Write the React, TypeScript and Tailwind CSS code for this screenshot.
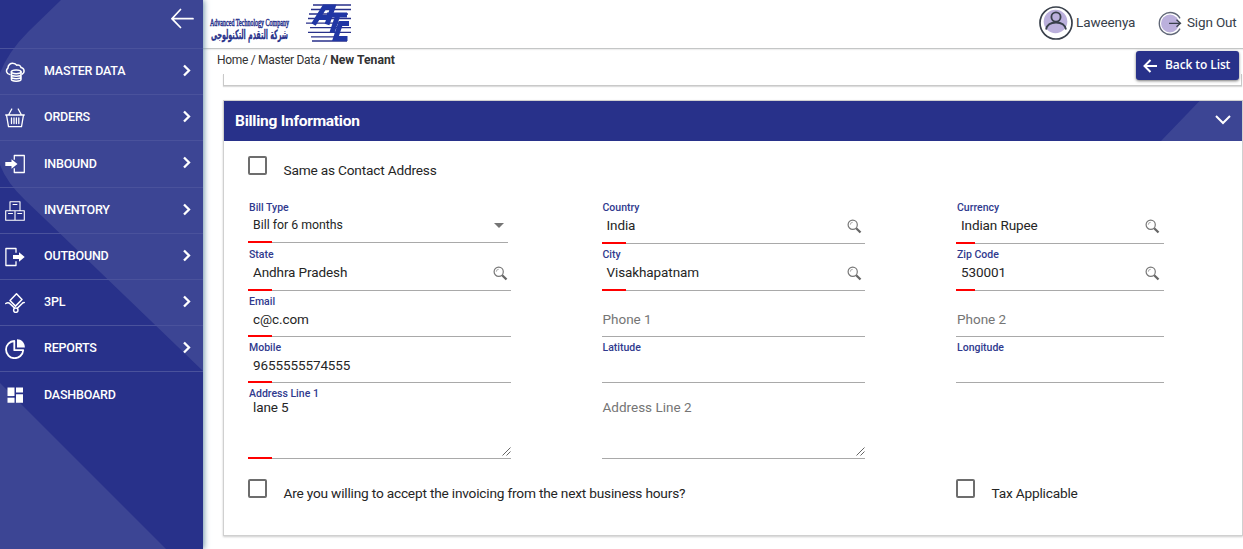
import React from "react";

type IconProps = { className?: string };

const strokeProps = {
  fill: "none",
  stroke: "currentColor",
  strokeWidth: 1.3,
  strokeLinecap: "round" as const,
  strokeLinejoin: "round" as const,
};

const CloudData = () => (
  <svg className="h-5 w-5" viewBox="0 0 20 20" {...strokeProps} strokeWidth={1.5}>
    <path d="M4.900 12.600A3.600 3.600 0 0 1 2.900 6.200C2.900 3 5.600 1 8 1.200c2 .1 3 1 3.600 2 2-.8 4.200.4 4.400 2.400 3.700.6 4 5 1.200 6.600" />
    <ellipse cx="11.200" cy="9.800" rx="4.800" ry="1.900" />
    <path d="M6.400 9.800v7.500c0 2.500 9.600 2.500 9.600 0V9.800M6.400 12.300c0 2.500 9.600 2.500 9.600 0M6.400 14.800c0 2.500 9.600 2.500 9.600 0" />
  </svg>
);
const Basket = () => (
  <svg className="h-5 w-5" viewBox="0 0 20 20" {...strokeProps}>
    <path d="M.7 7h18.600M1.500 7l2 11.700h13L18.500 7M6.800 1 3.500 7M13.200 1l3.300 6M6.500 10v5.500M9 10v5.500M11.400 10v5.500M13.800 10v5.500" />
  </svg>
);
const Inbound = () => (
  <svg className="h-5 w-5" viewBox="0 0 20 20" {...strokeProps}>
    <path d="M9.300 5V1.500h10v17h-10V15" strokeLinecap="square" />
    <path d="M.3 8h6.200V5.200l6 4.800-6 4.800V12H.3z" fill="currentColor" stroke="none" />
  </svg>
);
const Boxes = () => (
  <svg className="h-5 w-5" viewBox="0 0 20 20" {...strokeProps} strokeWidth={1.1}>
    <path d="M5 .8h10v9H5zM.7 9.800h9.300v9.400H.7zM10 9.800h9.300v9.400H10zM8 3.500h4M3.500 12.500h4M12.700 12.500h4" />
  </svg>
);
const Outbound = () => (
  <svg className="h-5 w-5" viewBox="0 0 20 20" {...strokeProps}>
    <path d="M11 5V1.500H.9v17H11V15" strokeLinecap="square" />
    <path d="M8 8h6V5.200l5.700 4.800-5.700 4.800V12H8z" fill="currentColor" stroke="none" />
  </svg>
);
const Parcel = () => (
  <svg className="h-5 w-5" viewBox="0 0 20 20" {...strokeProps} strokeWidth={1.5}>
    <path d="M11.500.8l5.500 5.700-6.500 6.600L5 7.500zM.7 10.500c1.800-1.200 3-1.200 4.300.2l4.400 4.200M19.300 9.500c-1 0-1.700.4-2.400 1.200l-4.200 4.200" />
    <circle cx="10.800" cy="17.200" r="2.200" />
  </svg>
);
const Pie = () => (
  <svg className="h-5 w-5" viewBox="0 0 20 20" {...strokeProps} strokeWidth={1.800}>
    <path d="M9.300 2a8.600 8.600 0 1 0 8.900 9.200H9.300z" />
    <path d="M12 .2c4.500 0 7.700 3.200 7.900 8.200H12z" fill="currentColor" stroke="none" />
  </svg>
);
const Dash = () => (
  <svg className="h-5 w-5" viewBox="0 0 20 20" fill="currentColor">
    <path d="M2.500 2.500h7v8.500h-7zM11 2.500h7v5h-7zM2.500 12.800h7v5h-7zM11 9.200h7v8.600h-7z" />
  </svg>
);

const menu: { label: string; icon: () => React.JSX.Element; arrow: boolean }[] = [
  { label: "MASTER DATA", icon: CloudData, arrow: true },
  { label: "ORDERS", icon: Basket, arrow: true },
  { label: "INBOUND", icon: Inbound, arrow: true },
  { label: "INVENTORY", icon: Boxes, arrow: true },
  { label: "OUTBOUND", icon: Outbound, arrow: true },
  { label: "3PL", icon: Parcel, arrow: true },
  { label: "REPORTS", icon: Pie, arrow: true },
  { label: "DASHBOARD", icon: Dash, arrow: false },
];

function Sidebar() {
  return (
    <aside className="relative z-10 h-full w-[203px] shrink-0 bg-[#28318a] text-white shadow-[1px_0_6px_#6c91a8]">
      <svg className="absolute inset-0" width="203" height="549" fill="#3c4594">
        <path d="M61 0L28 32Q8 52 0 73V165Q7 183 25 200L46 220 203 371V0Z" />
        <path d="M0 383L166 549H0Z" />
      </svg>
      <div className="relative">
        <div className="flex h-12 items-start justify-end pr-[9px] pt-2">
          <svg width="23" height="21" viewBox="0 0 23 21" fill="none" stroke="white" strokeWidth="1.700" strokeLinecap="round">
            <path d="M9.500 1.500L1 10.700l8.500 8.800M1 10.700h21" />
          </svg>
        </div>
        {menu.map(({ label, icon: Icon, arrow }) => (
          <div key={label} className="flex h-[46.2px] items-center border-t border-[#4a529c] pl-[5px] pr-[11px]">
            <span className="pt-px"><Icon /></span>
            <span className="ml-[19px] flex-1 text-[12.500px] font-medium tracking-[-0.2px]">{label}</span>
            {arrow && (
              <svg className="-mt-[2px]" width="10" height="13" viewBox="0 0 10 13" fill="none" stroke="white" strokeWidth="2.300">
                <path d="M2 1.500l5 5-5 5" />
              </svg>
            )}
          </div>
        ))}
      </div>
    </aside>
  );
}

function Logo() {
  return (
    <svg width="144" height="48" viewBox="0 0 144 48">
      <g fill="#28318a" stroke="#28318a">
        <text transform="translate(1 26) scale(1 1.9)" textLength="79" lengthAdjust="spacingAndGlyphs" fontSize="6" strokeWidth=".3" fontFamily="Liberation Serif, serif">Advanced Technology Company</text>
        <text transform="translate(79 39) scale(1 1.8)" direction="rtl" textLength="77" lengthAdjust="spacingAndGlyphs" fontSize="7.200" strokeWidth=".15" fontWeight="700" fontFamily="DejaVu Sans, sans-serif">شركة التقدم التكنولوجى</text>
      </g>
      <path d="M104 5h38M102 9.500h40M100 14h39M99 18.500h43M97 23.200h42M101 27.700h41M99 32.300h43M102 36.800h36M103 41h35" stroke="#28318a" strokeWidth="1.300" />
      <g fill="none" stroke="#2036a4" strokeWidth="5">
        <path d="M104.500 24.500L115.500 7h8.500l-6 17.500M109 17.500h11" />
        <path d="M118 15h20M129 15l-6 17.500" />
        <path d="M140 23.500h-8.500l-5 15h12" />
      </g>
    </svg>
  );
}

function Header() {
  return (
    <header className="flex h-[49px] items-center border-b border-[#c4c6c6] pl-[6px] pr-[6px] shadow-[0_1px_1px_#eeeeee]">
      <Logo />
      <div className="-mt-[2px] ml-auto flex items-center text-[13.500px] text-[#37404a]">
        <svg width="36" height="36" viewBox="0 0 36 36" fill="none" stroke="#39404b">
          <circle cx="18" cy="18" r="16" strokeWidth="1.700" />
          <circle cx="17.500" cy="16.500" r="11.800" fill="#bbb0dc" stroke="none" />
          <circle cx="18" cy="12" r="4.600" strokeWidth="1.800" />
          <path d="M8 24.500c1-5 5-7 10-7s9 2 10 7" strokeWidth="1.800" />
        </svg>
        <span className="-mt-[2px] ml-[2px] w-[60px] tracking-[-0.1px]">Laweenya</span>
        <svg className="ml-[22px]" width="25" height="25" viewBox="0 0 25 25" fill="none" stroke="#606777">
          <circle cx="12" cy="12.500" r="9" fill="#bbb0dc" stroke="none" />
          <path d="M22 7.300A11 11 0 1 0 22 17.700" strokeWidth="1.400" />
          <path d="M11 12.300h11.500M18.500 8.800l4 3.500-4 3.500" stroke="#39404b" strokeWidth="1.300" />
        </svg>
        <span className="-mt-[2px] ml-[4px] w-[50px] whitespace-nowrap tracking-[-0.150px]">Sign Out</span>
      </div>
    </header>
  );
}

const Magnifier = ({ className = "" }: IconProps) => (
  <svg className={className} width="15" height="15" viewBox="0 0 15 15" fill="none">
    <circle cx="5.700" cy="5.700" r="4.600" stroke="#777" strokeWidth="1.200" />
    <path d="M3.300 5.700a2.400 2.400 0 0 1 2.400-2.400" stroke="#aaa" />
    <path d="M9.200 9.200l4.300 4.300" stroke="#666" strokeWidth="2.300" />
  </svg>
);

type FieldProps = {
  label?: string;
  value?: string;
  placeholder?: string;
  kind?: "text" | "search" | "select" | "area";
  required?: boolean;
  narrow?: boolean;
  className?: string;
};

function Field({ label, value, placeholder, kind = "text", required, narrow, className = "" }: FieldProps) {
  const isArea = kind === "area";
  return (
    <div className={`flex flex-col ${className}`}>
      <div className="mt-[4px] h-[14px] pl-px text-[10.500px] font-medium leading-[14px] text-[#303a8e]">{label}</div>
      <div className={`flex h-5 items-center ${kind === "select" ? "text-[12.300px]" : "text-[13.500px] tracking-[-0.1px]"} ${isArea ? "-mt-[4px]" : ""}`}>
        {value && <span className="pl-[5px] text-[#252525]">{value}</span>}
        {placeholder && <span className="pl-px tracking-normal text-[#757575]">{placeholder}</span>}
        {kind === "search" && <Magnifier className={narrow ? "ml-auto mr-[4px] mt-[2px]" : "ml-auto mr-[3px] mt-[2px]"} />}
        {kind === "select" && (
          <svg className="ml-auto mr-[4px]" width="10" height="5" viewBox="0 0 10 5" fill="#757575"><path d="M0 0h10L5 5z" /></svg>
        )}
      </div>
      {isArea && (
        <svg className="ml-auto mt-auto" width="9" height="9" viewBox="0 0 9 9" stroke="#666" strokeWidth="1"><path d="M.5 8.500l8-8M4.500 8.500l4-4" /></svg>
      )}
      <div className={`relative h-px bg-[#a9a9a9] ${isArea ? "mt-[2px]" : "mt-auto"}`}>
        {required && <span className={`absolute bottom-0 left-0 h-[2px] bg-[#ff0000] ${narrow ? "w-[19px]" : "w-[24px]"}`} />}
      </div>
    </div>
  );
}

function Check({ label }: { label: string }) {
  return (
    <div className="flex items-start">
      <span className="h-[19px] w-[19px] rounded-[2px] border-2 border-[#6d6d6d]" />
      <span className="ml-[16.500px] pt-[5px] text-[13.700px] leading-[19px] tracking-[-0.2px] text-[#252525]">{label}</span>
    </div>
  );
}

const cols = "grid grid-cols-[263px_263px_208px] gap-x-[91px]";

export default function App() {
  return (
    <div className="flex h-[549px] w-[1243px] overflow-hidden bg-white font-['Roboto',sans-serif]">
      <Sidebar />
      <main className="flex min-w-0 flex-1 flex-col">
        <Header />
        <div className="flex h-[36px] shrink-0 pl-[14px] pr-[4px]">
          <div className="pt-[3px] text-[12px] leading-[16px] tracking-[-0.3px] text-[#333]">
            Home / Master Data / <b className="text-[12.200px] font-bold tracking-normal">New Tenant</b>
          </div>
          <button className="z-10 ml-auto mt-[2px] flex h-[29px] w-[103px] items-center rounded-[3px] bg-[#28318a] pb-[2px] pl-[7px] font-['Open_Sans',sans-serif] text-[12px] font-semibold tracking-[-0.1px] text-white shadow-[0_1px_3px_#777]">
            <svg className="mr-[7px] mt-[2px]" width="15" height="14" viewBox="0 0 15 14" fill="none" stroke="white" strokeWidth="2"><path d="M7.500 1L1.500 7l6 6M1.500 7H14" /></svg>
            Back to List
          </button>
        </div>
        <div className="-mt-[11px] ml-[20px] h-[12px] w-[1019px] shrink-0 border-x border-b border-[#c9c9c9] shadow-[0_1px_1px_#ddd]" />
        <section className="ml-[20px] mt-[14px] h-[436px] w-[1020px] shrink-0 border border-[#d0d0d0] bg-white shadow-[0_1px_2px_#ccc]">
          <div className="flex h-[40px] items-center justify-between bg-[#28318a] pl-[11px] text-white">
            <h2 className="pt-[2px] text-[15.500px] font-bold tracking-[-0.250px]">Billing Information</h2>
            <svg width="81" height="40" viewBox="0 0 81 40">
              <path d="M38.500 0L0 40h81V0z" fill="#3c4594" />
              <path d="M55 15l7 7 7-7" fill="none" stroke="white" strokeWidth="2" />
            </svg>
          </div>
          <div className="pl-[24px]">
            <div className="h-[56px] pt-[15px]"><Check label="Same as Contact Address" /></div>
            <div className={`${cols} grid-rows-[47px_47px_46px_46px_76px]`}>
              <Field className="mb-px mr-[3px]" label="Bill Type" value="Bill for 6 months" kind="select" required />
              <Field className="-ml-[0.500px]" label="Country" value="India" kind="search" required />
              <Field label="Currency" value="Indian Rupee" kind="search" required narrow />
              <Field label="State" value="Andhra Pradesh" kind="search" required />
              <Field className="-ml-[0.500px]" label="City" value="Visakhapatnam" kind="search" required />
              <Field label="Zip Code" value="530001" kind="search" required narrow />
              <Field label="Email" value="c@c.com" required />
              <Field className="-ml-[0.500px]" placeholder="Phone 1" />
              <Field placeholder="Phone 2" />
              <Field label="Mobile" value="9655555574555" required />
              <Field className="-ml-[0.500px]" label="Latitude" />
              <Field label="Longitude" />
              <Field label="Address Line 1" value="lane 5" kind="area" required />
              <Field className="-ml-[0.500px]" placeholder="Address Line 2" kind="area" />
            </div>
            <div className={`${cols} pt-[20px]`}>
              <div className="col-span-2"><Check label="Are you willing to accept the invoicing from the next business hours?" /></div>
              <Check label="Tax Applicable" />
            </div>
          </div>
        </section>
      </main>
    </div>
  );
}
